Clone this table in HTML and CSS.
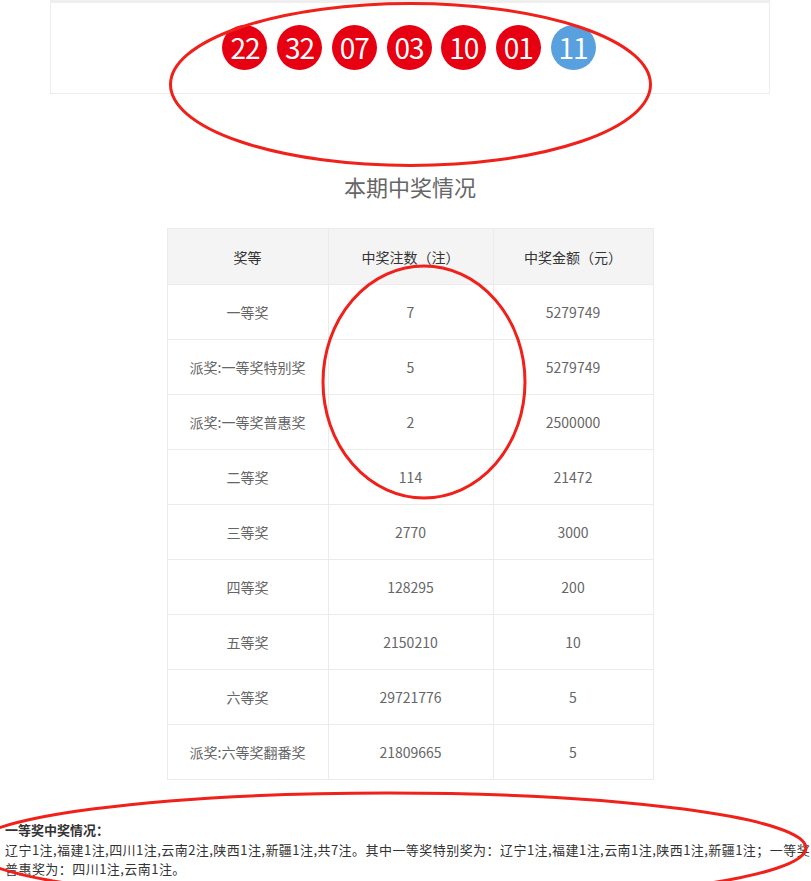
FILE: index.html
```html
<!DOCTYPE html>
<html lang="zh-CN">
<head>
<meta charset="utf-8">
<title>本期中奖情况</title>
<link rel="stylesheet" href="styles.css">
</head>
<body>
<div class="page">
  <div class="balls-box">
    <div class="balls">
      <span class="ball red">22</span>
      <span class="ball red">32</span>
      <span class="ball red">07</span>
      <span class="ball red">03</span>
      <span class="ball red">10</span>
      <span class="ball red">01</span>
      <span class="ball blue">11</span>
    </div>
  </div>

  <h2 class="title">本期中奖情况</h2>

  <table class="prize-table">
    <thead>
      <tr><th class="c1">奖等</th><th class="c2">中奖注数（注）</th><th class="c3">中奖金额（元）</th></tr>
    </thead>
    <tbody>
      <tr><td>一等奖</td><td>7</td><td>5279749</td></tr>
      <tr><td>派奖:一等奖特别奖</td><td>5</td><td>5279749</td></tr>
      <tr><td>派奖:一等奖普惠奖</td><td>2</td><td>2500000</td></tr>
      <tr><td>二等奖</td><td>114</td><td>21472</td></tr>
      <tr><td>三等奖</td><td>2770</td><td>3000</td></tr>
      <tr><td>四等奖</td><td>128295</td><td>200</td></tr>
      <tr><td>五等奖</td><td>2150210</td><td>10</td></tr>
      <tr><td>六等奖</td><td>29721776</td><td>5</td></tr>
      <tr><td>派奖:六等奖翻番奖</td><td>21809665</td><td>5</td></tr>
    </tbody>
  </table>
</div>

<div class="detail">
  <p class="detail-title">一等奖中奖情况：</p>
  <p class="detail-text">辽宁1注,福建1注,四川1注,云南2注,陕西1注,新疆1注,共7注。其中一等奖特别奖为：辽宁1注,福建1注,云南1注,陕西1注,新疆1注；一等奖<br>普惠奖为：四川1注,云南1注。</p>
</div>

<svg class="marks" width="811" height="881" viewBox="0 0 811 881" aria-hidden="true">
  <ellipse cx="410.5" cy="84.5" rx="240" ry="81" />
  <ellipse cx="424" cy="382" rx="101" ry="116" />
  <ellipse cx="388" cy="848" rx="418" ry="55" />
</svg>
</body>
</html>
```
FILE: styles.css
```css
html, body {
  margin: 0;
  padding: 0;
  overflow: hidden;
}
body {
  font-family: "Noto Sans CJK SC", "Noto Sans", sans-serif;
  background: #fff;
  color: #666;
  width: 811px;
  height: 881px;
  position: relative;
}
.page {
  width: 720px;
  margin-left: 50px;
  display: flex;
  flex-direction: column;
  align-items: center;
}
.balls-box {
  width: 720px;
  box-sizing: border-box;
  height: 94px;
  border: 1px solid #ececec;
  border-top: 3px solid #efefef;
  display: flex;
  align-items: center;
  justify-content: center;
  padding-bottom: 2px;
}
.balls {
  display: flex;
  gap: 9.7px;
  margin-left: -2px;
}
.ball {
  width: 45px;
  height: 45px;
  border-radius: 50%;
  display: flex;
  align-items: center;
  justify-content: center;
  color: #fff;
  font-size: 28px;
  line-height: 1;
  letter-spacing: -1px;
}
.ball.red { background: #e60012; }
.ball.blue { background: #58a1de; }

.title {
  margin: 77px 0 0;
  font-size: 22px;
  font-weight: normal;
  line-height: 30px;
  color: #666;
}
.prize-table {
  margin-top: 27px;
  border-collapse: collapse;
  width: 483px;
  table-layout: fixed;
  font-size: 14px;
}
.prize-table th,
.prize-table td {
  border: 1px solid #ebebeb;
  height: 54px;
  padding: 0;
  text-align: center;
  line-height: 20px;
}
.prize-table th {
  background: #f4f4f4;
  font-weight: normal;
  color: #333;
  height: 55px;
}
.prize-table td { color: #666; }
.prize-table .c1 { width: 160px; }
.prize-table .c2 { width: 164px; }
.prize-table .c3 { width: 159px; }

.detail {
  margin-top: 40px;
  padding-left: 5px;
  font-size: 13px;
  line-height: 19.5px;
  color: #333;
  white-space: nowrap;
}
.detail p { margin: 0; }
.detail-title { font-weight: bold; }
.detail-text { letter-spacing: 0.45px; }

.marks {
  position: absolute;
  left: 0;
  top: 0;
  pointer-events: none;
}
.marks ellipse {
  fill: none;
  stroke: #f0201a;
  stroke-width: 3;
}
```
